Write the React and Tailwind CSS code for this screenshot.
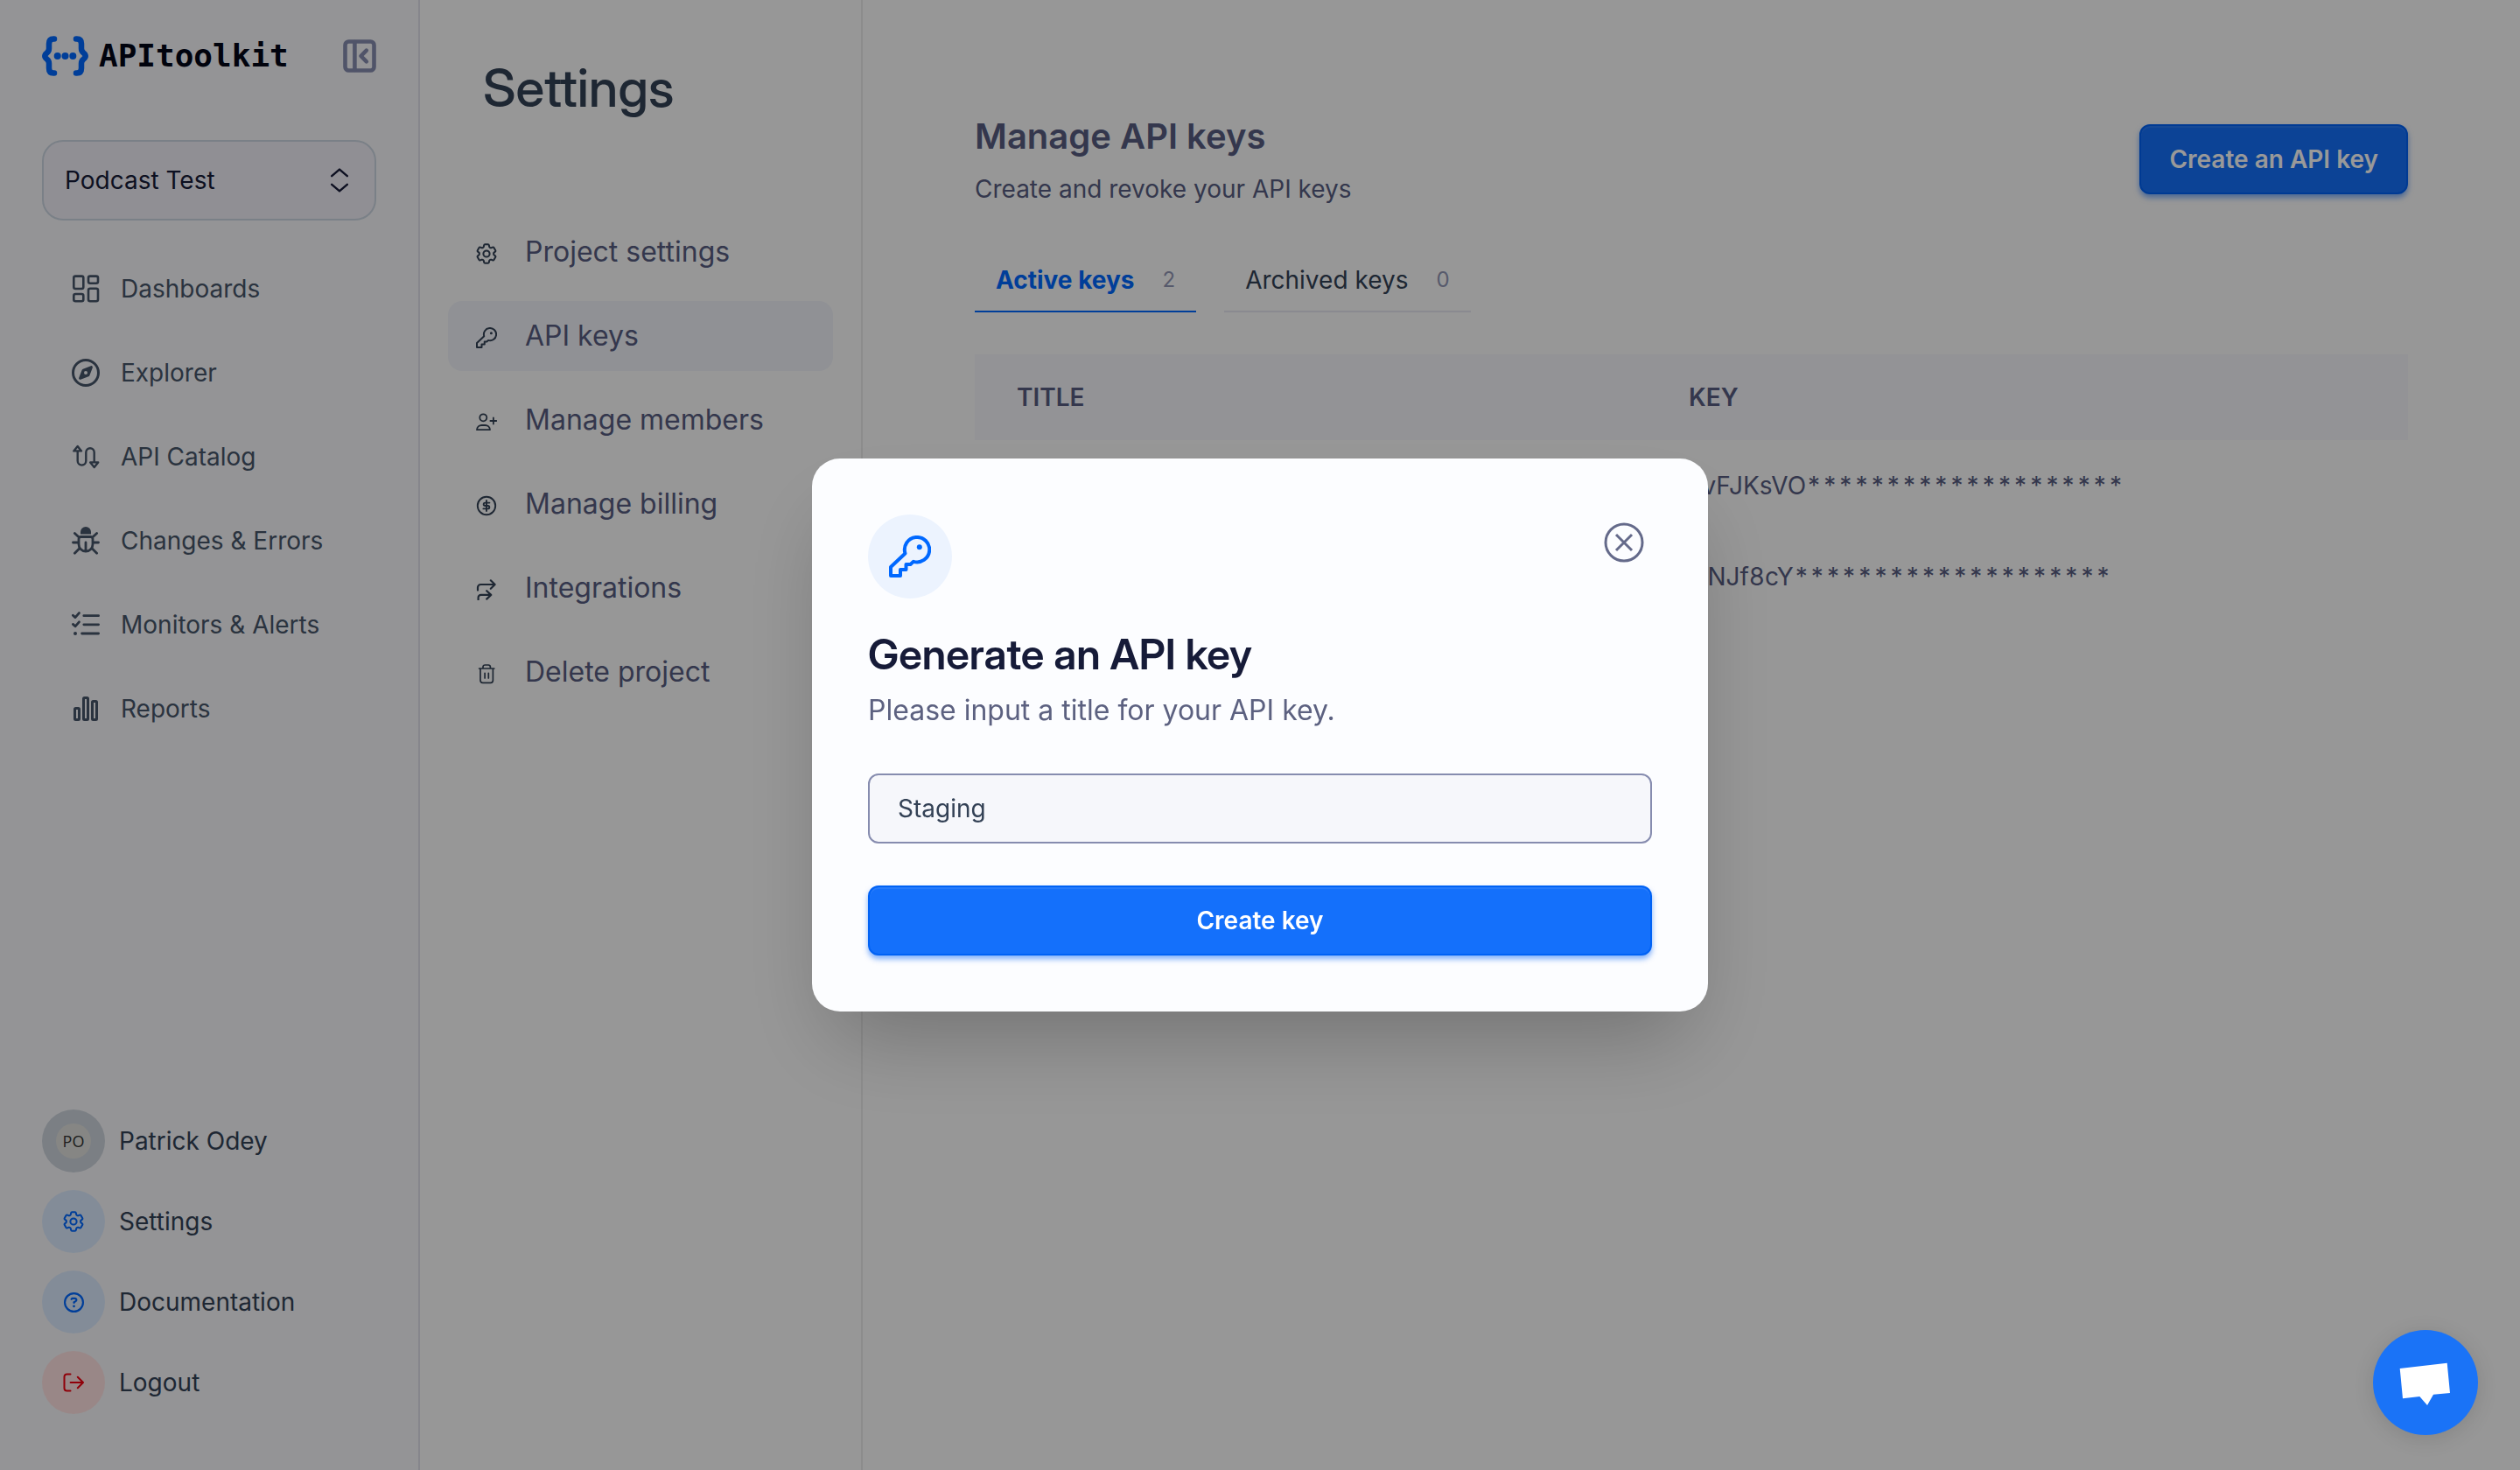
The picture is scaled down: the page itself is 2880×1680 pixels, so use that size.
import { HiOutlineCog6Tooth } from "react-icons/hi2";
import { FaRegCompass, FaRegCircleQuestion } from "react-icons/fa6";

function Glyph({ size = 32, width = 2, className = "", children }) {
  return (
    <svg
      width={size}
      height={size}
      viewBox={`0 0 ${size} ${size}`}
      fill="none"
      stroke="currentColor"
      strokeWidth={width}
      strokeLinecap="round"
      strokeLinejoin="round"
      className={`shrink-0 ${className}`}
      aria-hidden="true"
    >
      {children}
    </svg>
  );
}

const BraceLogo = () => (
  <svg width="53" height="46" viewBox="0 0 53 46" fill="none" stroke="#0068ff" strokeWidth="6.5" strokeLinecap="round" strokeLinejoin="round" className="shrink-0" aria-hidden="true">
    <path d="M14 3.5H13Q8 3.5 8 9v5.5Q8 17.5 5.5 19.5L3.8 21.3Q2.8 23 3.8 24.7L5.5 26.5Q8 28.5 8 31.5V37Q8 42.5 13 42.5H14" />
    <path d="M39 3.5H40Q45 3.5 45 9v5.5Q45 17.5 47.5 19.5L49.2 21.3Q50.2 23 49.2 24.7L47.5 26.5Q45 28.5 45 31.5V37Q45 42.5 40 42.5H39" />
    <g fill="#0068ff" stroke="none">
      <circle cx="17.7" cy="23" r="4" />
      <circle cx="26.5" cy="23" r="4" />
      <circle cx="35.3" cy="23" r="4" />
    </g>
  </svg>
);

const CollapseIcon = () => (
  <Glyph size={38} width={4.6}>
    <rect x="2.5" y="2.5" width="33" height="33" rx="4" />
    <path d="M13.4 3v32M26.8 12.6 20.5 19l6.3 6.4" />
  </Glyph>
);

const DashboardIcon = () => (
  <Glyph width={2.6}>
    <rect x="2.3" y="1.6" width="11" height="14.4" rx="2" />
    <rect x="19" y="1.6" width="11" height="8.2" rx="2" />
    <rect x="2.3" y="22" width="11" height="8.2" rx="2" />
    <rect x="19" y="15.8" width="11" height="14.4" rx="2" />
  </Glyph>
);

const RouteIcon = () => (
  <Glyph width={2.4}>
    <path d="M6.7 4 11 9.4H2.3ZM25.7 28l-4.5-5.6h9ZM6.7 10v10.8a4.8 4.8 0 0 0 9.6 0V11a4.7 4.7 0 0 1 9.4 0v11" />
  </Glyph>
);

const BugIcon = () => (
  <Glyph width={2.8}>
    <path d="M10 8.4V6a6 6 0 0 1 12 0v2.4Z" fill="currentColor" stroke="none" />
    <path d="M10.5 11.5h11a2.5 2.5 0 0 1 2.5 2.5v6a8 8 0 0 1-16 0v-6a2.5 2.5 0 0 1 2.5-2.5ZM16 18v10M1.5 18H8M24 18h6.5M3.4 7.5 8.2 12M28.6 7.5 23.8 12M3.4 30.3l5.2-5.2M28.6 30.3l-5.2-5.2" />
  </Glyph>
);

const ChecklistIcon = () => (
  <Glyph width={2.8}>
    <path d="M13.8 5.7h16.8M13.8 15.8h16.8M11.6 26h19M1.4 5.2 4 7.6l4.4-5M1.4 15.4 4 17.8l4.4-5" />
    <circle cx="4" cy="26" r="2" fill="currentColor" stroke="none" />
  </Glyph>
);

const BarsIcon = () => (
  <Glyph width={3}>
    <rect x="3.5" y="15.5" width="5" height="13" rx="1" />
    <rect x="13.5" y="3.5" width="5" height="25" rx="1" />
    <rect x="23.5" y="7.5" width="5" height="21" rx="1" />
  </Glyph>
);

const GearIcon = () => (
  <HiOutlineCog6Tooth viewBox="2 2 20 20" size={24} strokeWidth={1.7} className="shrink-0" aria-hidden="true" />
);

function KeyIcon({ size = 24 }) {
  return (
    <svg width={size} height={size} viewBox="0 0 48 48" fill="none" stroke="currentColor" strokeWidth="4" strokeLinejoin="round" className="shrink-0" aria-hidden="true">
      <path d="M18.5 20.5a14.2 14.2 0 1 1 9.5 9.3l-3.5 3.2h-5v6H13v7H2V36Z" />
      <circle cx="34.8" cy="13.3" r="3" fill="currentColor" stroke="none" />
    </svg>
  );
}

const UserPlusIcon = () => (
  <Glyph size={24} width={1.8}>
    <circle cx="8.3" cy="7.3" r="4" />
    <path d="M1 21.2a5.5 5.5 0 0 1 5.5-5.2h4a5.5 5.5 0 0 1 5.5 5.2ZM16.4 11h7M19.9 7.5v7" />
  </Glyph>
);

const DollarIcon = () => (
  <Glyph size={24} width={1.9}>
    <circle cx="12" cy="12" r="10.2" />
    <path d="M15.4 8.6h-5a1.7 1.7 0 0 0 0 3.4h3.2a1.7 1.7 0 0 1 0 3.4H8.4M12 6v12" />
  </Glyph>
);

const ArrowsIcon = () => (
  <Glyph size={24} width={2.2}>
    <path d="M2 12.6V9.5a3.5 3.5 0 0 1 3.5-3.5H21.5M16.8 1.3 21.6 6l-4.8 4.8M2.6 23.5v-2.6a3 3 0 0 1 3-3h11.6M12.2 13.2l5 4.7-5 4.7" />
  </Glyph>
);

const TrashIcon = () => (
  <Glyph size={24} width={1.7}>
    <path d="M3.6 6h17.2M8 6V4.2A2.2 2.2 0 0 1 10.2 2h4a2.2 2.2 0 0 1 2.2 2.2V6M5 6v13.5A2.8 2.8 0 0 0 7.8 22.3h8.8a2.8 2.8 0 0 0 2.8-2.8V6M10.1 11.3V17M14.3 11.3V17" />
  </Glyph>
);

const LogoutIcon = () => (
  <Glyph size={24} width={2}>
    <path d="M8.5 2.4h-4a3 3 0 0 0-3 3v13.2a3 3 0 0 0 3 3h4M8.6 12h14M16.8 5.8 23 12l-6.2 6.2" />
  </Glyph>
);

const navItems = [
  { label: "Dashboards", icon: <DashboardIcon /> },
  { label: "Explorer", icon: <FaRegCompass size={32} className="shrink-0" aria-hidden="true" /> },
  { label: "API Catalog", icon: <RouteIcon /> },
  { label: "Changes & Errors", icon: <BugIcon /> },
  { label: "Monitors & Alerts", icon: <ChecklistIcon /> },
  { label: "Reports", icon: <BarsIcon /> },
];

const accountItems = [
  { label: "Settings", icon: <GearIcon />, tone: "bg-[#dbeafe] text-[#0068ff]" },
  { label: "Documentation", icon: <FaRegCircleQuestion size={23} aria-hidden="true" />, tone: "bg-[#dbeafe] text-[#0068ff]" },
  { label: "Logout", icon: <LogoutIcon />, tone: "bg-[#ffe2e2] text-[#f0000f]" },
];

const settingsItems = [
  { label: "Project settings", icon: <GearIcon /> },
  { label: "API keys", icon: <KeyIcon />, active: true },
  { label: "Manage members", icon: <UserPlusIcon /> },
  { label: "Manage billing", icon: <DollarIcon /> },
  { label: "Integrations", icon: <ArrowsIcon /> },
  { label: "Delete project", icon: <TrashIcon /> },
];

const keys = ["cvFJKsVO********************", "QNJf8cY********************"];

function Sidebar() {
  return (
    <aside className="flex w-[480px] shrink-0 flex-col border-r-2 border-[#e0e0ea] bg-[#f7f7fa] px-12 pt-10 pb-16">
      <div className="flex h-12 items-center justify-between">
        <a href="#home" className="flex items-center gap-3">
          <BraceLogo />
          <span className="font-['DejaVu_Sans_Mono',monospace] text-[36px] leading-none font-bold text-[#020617]">APItoolkit</span>
        </a>
        <button type="button" aria-label="Collapse sidebar" className="text-[#868caf]">
          <CollapseIcon />
        </button>
      </div>

      <div className="mt-[72px] grid items-center">
        <select
          aria-label="Project"
          className="h-[92px] w-full appearance-none rounded-3xl border-2 border-[#cbd5e1] bg-[#f1eff7] px-6 text-[#161b38] [grid-area:1/1]"
        >
          <option>Podcast Test</option>
        </select>
        <svg width="20" height="28" viewBox="0 0 20 28" fill="none" stroke="#161b38" strokeWidth="2.4" strokeLinecap="round" strokeLinejoin="round" className="pointer-events-none mr-8 justify-self-end [grid-area:1/1]" aria-hidden="true">
          <path d="M1.2 9.2 10 1.6l8.8 7.6M1.2 18.8 10 26.4l8.8-7.6" />
        </svg>
      </div>

      <nav className="mt-[38px] flex flex-col gap-4 text-[#475569]">
        {navItems.map((item) => (
          <a key={item.label} href="#nav" className="flex h-20 items-center gap-6 px-[34px]">
            {item.icon}
            {item.label}
          </a>
        ))}
      </nav>

      <div className="mt-auto flex flex-col gap-5 text-[#334155]">
        <a href="#profile" className="flex items-center gap-4">
          <span className="flex size-18 items-center justify-center rounded-full bg-[#cdd4dc]">
            <span className="flex size-10 items-center justify-center rounded-full bg-[#e0e0dc] font-['Open_Sans',sans-serif] text-[18px] text-[#333333]">PO</span>
          </span>
          Patrick Odey
        </a>
        {accountItems.map((item) => (
          <a key={item.label} href="#account" className="flex items-center gap-4">
            <span className={`flex size-18 items-center justify-center rounded-full ${item.tone}`}>{item.icon}</span>
            {item.label}
          </a>
        ))}
      </div>
    </aside>
  );
}

function SettingsPanel() {
  return (
    <section className="w-[506px] shrink-0 border-r-2 border-[#eaeaea] bg-[#fcfcfc] px-8 pt-16">
      <h1 className="px-10 font-['Inter_Display',Inter,sans-serif] text-[60px] leading-[72px] font-medium text-[#334155]">Settings</h1>
      <nav className="mt-28 flex flex-col gap-4 text-[32px] text-[#575c80]">
        {settingsItems.map((item) => (
          <a
            key={item.label}
            href="#settings"
            className={`flex h-20 items-center gap-8 rounded-2xl px-8 ${item.active ? "bg-[#f0f2f8]" : ""}`}
          >
            <span className="mt-1 text-[#334155]">{item.icon}</span>
            {item.label}
          </a>
        ))}
      </nav>
    </section>
  );
}

const primaryButton =
  "h-20 rounded-xl border-2 border-[#0062f5] bg-[#1470fb] font-semibold text-white shadow-[inset_0_2px_0_rgba(255,255,255,0.08),0_4px_6px_rgba(0,98,245,0.5)]";

function KeysPage() {
  return (
    <main className="min-w-0 grow bg-[#fcfcfc] px-32 pt-32">
      <div className="flex items-start justify-between">
        <div>
          <h2 className="text-[40px] leading-[56px] font-semibold text-[#575c80]">Manage API keys</h2>
          <p className="mt-3 leading-10 text-[#575c80]">Create and revoke your API keys</p>
        </div>
        <button type="button" className={`mt-[14px] px-8 ${primaryButton}`}>Create an API key</button>
      </div>

      <div role="tablist" className="mt-11 flex gap-8">
        <button type="button" role="tab" aria-selected="true" className="flex h-[77px] items-center gap-8 border-b-2 border-[#0068ff] px-6 pt-1 font-bold text-[#0068ff]">
          Active keys
          <span className="text-[24px] font-normal text-[#9196b4]">2</span>
        </button>
        <button type="button" role="tab" aria-selected="false" className="flex h-[77px] items-center gap-8 border-b-2 border-[#e6e6f0] px-6 pt-1 text-[#334155]">
          Archived keys
          <span className="text-[24px] text-[#9196b4]">0</span>
        </button>
      </div>

      <table className="mt-12 w-full table-fixed text-left text-[#575c80]">
        <colgroup>
          <col className="w-[768px]" />
          <col />
        </colgroup>
        <thead>
          <tr className="h-[98px] bg-[#f5f5fa]">
            <th className="px-12 font-semibold">TITLE</th>
            <th className="px-12 font-semibold">KEY</th>
          </tr>
        </thead>
        <tbody>
          {keys.map((key) => (
            <tr key={key} className="h-26 tabular-nums">
              <td className="px-12" />
              <td className="px-12">{key}</td>
            </tr>
          ))}
        </tbody>
      </table>
    </main>
  );
}

function GenerateKeyDialog() {
  return (
    <div className="fixed inset-0 flex items-center justify-center bg-black/40">
      <div role="dialog" aria-modal="true" aria-labelledby="dialog-title" className="w-full max-w-[1024px] rounded-[32px] bg-[#fcfdff] p-16 shadow-[0_50px_100px_-24px_rgba(0,0,0,0.25)]">
        <div className="flex items-start justify-between">
          <span className="flex size-24 items-center justify-center rounded-full bg-[#ecf3fe] text-[#0068ff]">
            <KeyIcon size={48} />
          </span>
          <button type="button" aria-label="Close" className="flex size-16 items-center justify-center text-[#646a8a]">
            <svg width="46" height="46" viewBox="0 0 46 46" fill="none" stroke="currentColor" strokeWidth="3" aria-hidden="true">
              <circle cx="23" cy="23" r="21" />
              <path d="M14 14l18 18M32 14 14 32" />
            </svg>
          </button>
        </div>
        <h3 id="dialog-title" className="mt-8 font-['Inter_Display',Inter,sans-serif] text-[48px] leading-[64px] font-semibold text-[#161b38]">Generate an API key</h3>
        <form onSubmit={(event) => event.preventDefault()}>
          <label htmlFor="key-title" className="mt-2 block text-[32px] leading-[48px] text-[#5c6180]">Please input a title for your API key.</label>
          <input
            id="key-title"
            type="text"
            defaultValue="Staging"
            className="mt-12 block h-20 w-full rounded-xl border-2 border-[#868caf] bg-[#f6f7fb] px-8 text-[#334155]"
          />
          <button type="submit" className={`mt-12 block w-full ${primaryButton}`}>Create key</button>
        </form>
      </div>
    </div>
  );
}

export default function App() {
  return (
    <div className="flex min-h-screen font-[Inter,sans-serif] text-[28px] leading-10">
      <Sidebar />
      <SettingsPanel />
      <KeysPage />
      <GenerateKeyDialog />
      <button type="button" aria-label="Open chat" className="fixed right-12 bottom-10 size-30 rounded-full bg-[#1a73f7] shadow-[0_4px_24px_rgba(0,0,0,0.12)]">
        <svg viewBox="0 0 120 120" className="size-full" fill="#ffffff" aria-hidden="true">
          <path d="M30.7 44 84.7 37.7 88 72 69 73.7 62 86 53.3 76 34 78.3Z" />
        </svg>
      </button>
    </div>
  );
}
